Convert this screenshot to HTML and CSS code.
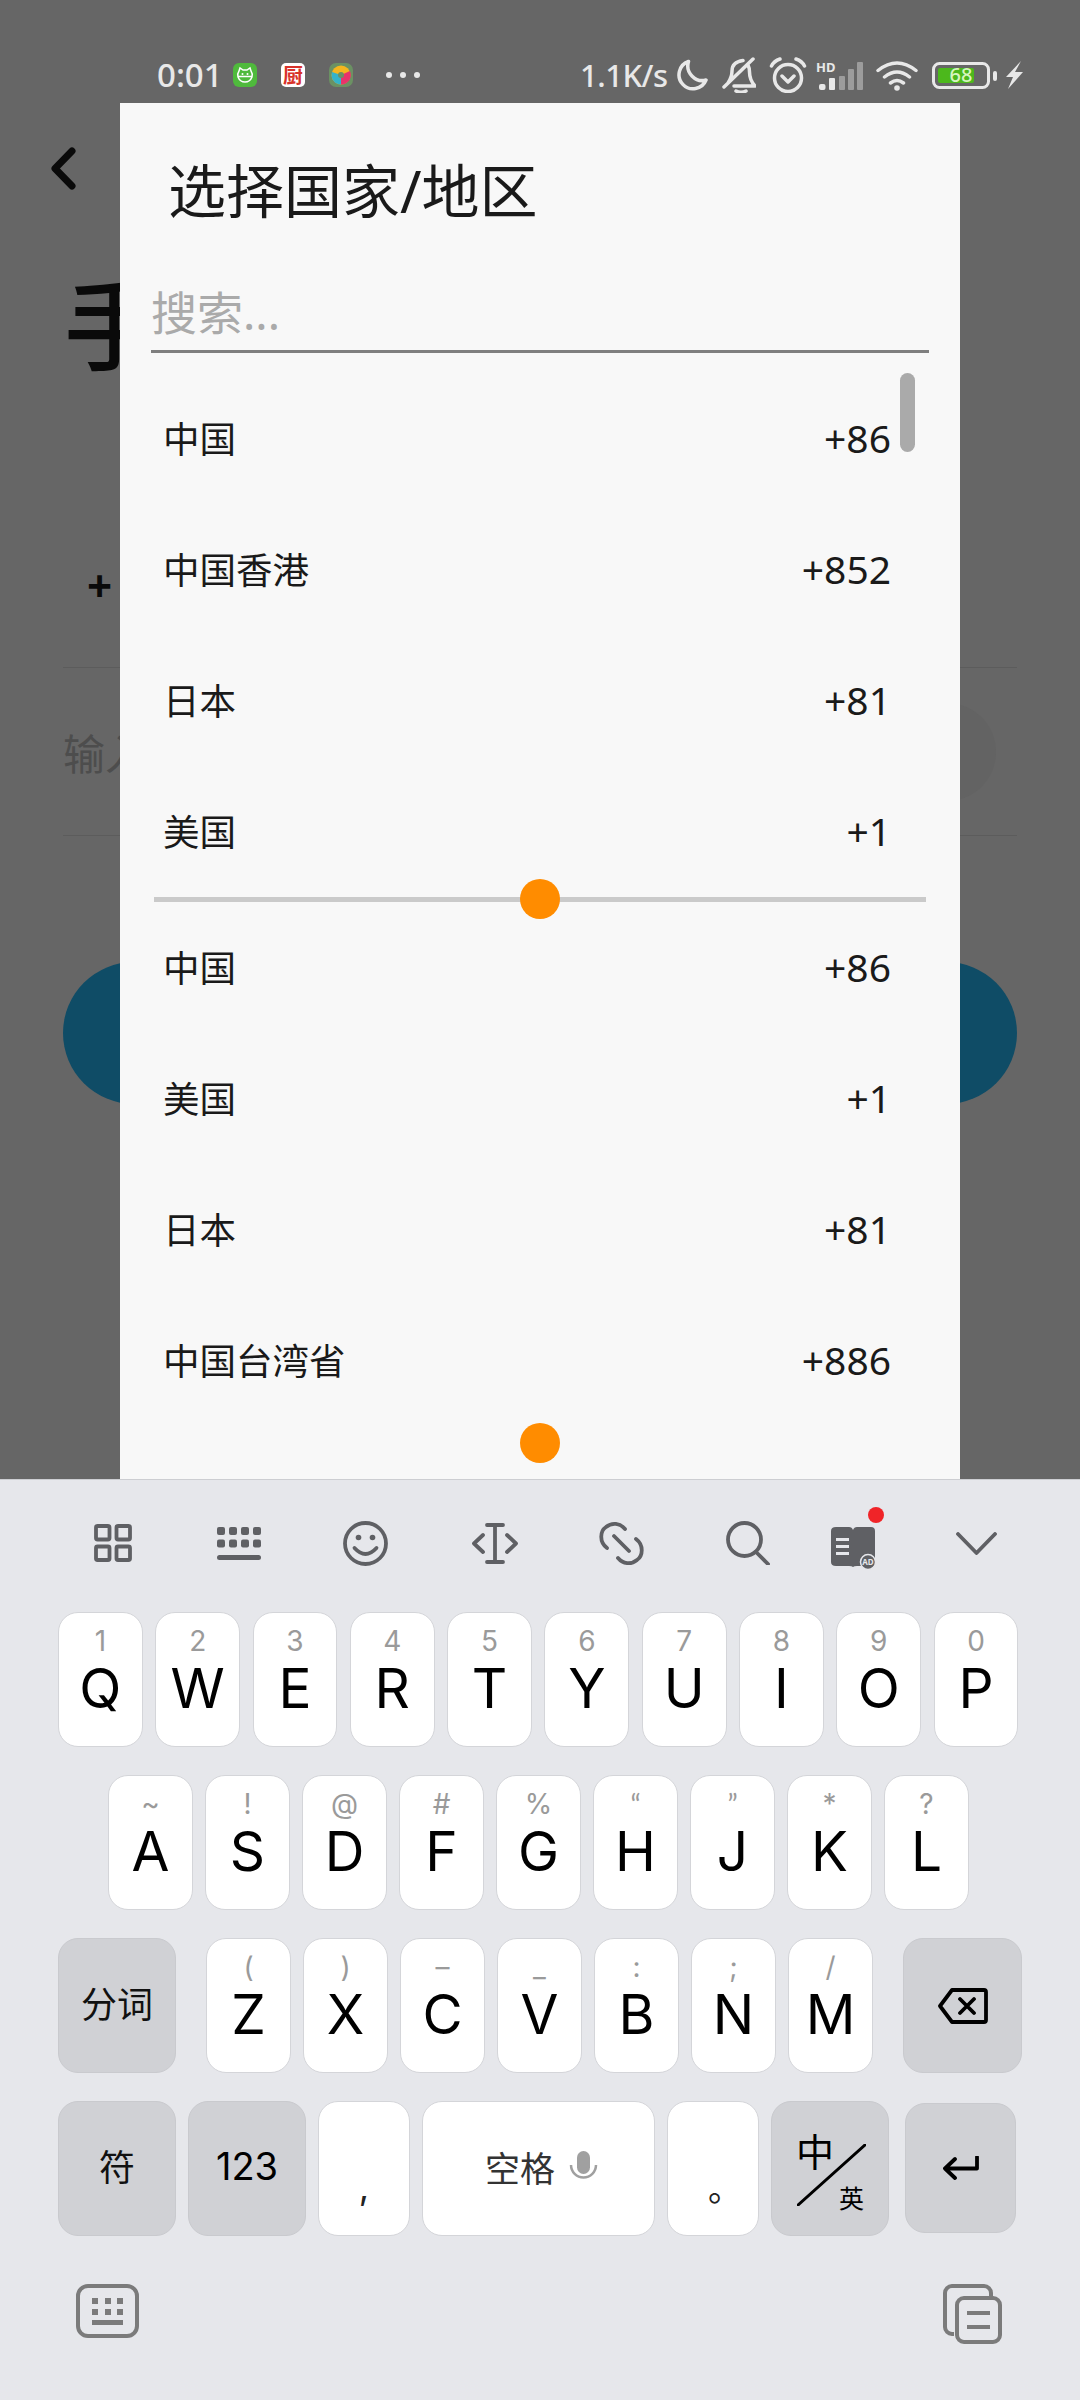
FILE: index.html
```html
<!DOCTYPE html>
<html lang="zh-CN">
<head>
  <meta charset="UTF-8" />
  <meta name="viewport" content="width=device-width, initial-scale=1.0"/>
  <title>选择国家/地区</title>
  <link rel="stylesheet" href="styles.css">
</head>
<body>
<div class="screen">

  <!-- dimmed login page behind the dialog -->
  <div class="page">
    <div class="status">
      <div class="status-left">
        <span class="status-time">0:01</span>
        <svg class="app-icon" viewBox="0 0 24 24">
          <rect width="24" height="24" rx="6" fill="#4fba3c"/>
          <path d="M6 8 L7 5 L10 7 H14 L17 5 L18 8 Q20 11 19 14 Q17 19 12 19 Q7 19 5 14 Q4 11 6 8 Z M5.500 13.500 H18.500" fill="none" stroke="#fff" stroke-width="1.500"/>
          <circle cx="9.500" cy="11" r="1" fill="#fff"/>
          <circle cx="14.500" cy="11" r="1" fill="#fff"/>
        </svg>
        <svg class="app-icon app-gap" viewBox="0 0 24 24">
          <rect width="24" height="24" rx="5" fill="#fff"/>
          <text class="chef" x="12" y="20" text-anchor="middle">厨</text>
        </svg>
        <svg class="app-icon app-gap" viewBox="0 0 24 24">
          <rect width="24" height="24" rx="7" fill="#6b9163"/>
          <circle cx="12" cy="12" r="9.500" fill="#f5b51e"/>
          <path d="M12 12 L21 8 A9.500 9.500 0 0 1 12 21.500 Z" fill="#e8336b"/>
          <path d="M12 12 L12 21.500 A9.500 9.500 0 0 1 3 9 Z" fill="#35b3c9"/>
          <circle cx="12" cy="12" r="3" fill="#6b9163"/>
        </svg>
        <div class="more-dots"><i></i><i></i><i></i></div>
      </div>
      <div class="status-right">
        <span class="status-speed">1.1K/s</span>
        <svg class="icon moon" viewBox="0 0 32 32"><path d="M12.500 2.500A14 14 0 1 0 30 21C20 24 9 14 12.500 2.500Z"/></svg>
        <svg class="icon bell" viewBox="0 0 34 36">
          <path d="M31 2 L2 30 M6 26 Q10 20 10 14 Q10 5 21 3.500 M26 8 Q27.500 11 27.500 15 Q27.500 23 33 29 H12 M14 34 Q19 36.500 24 34"/>
        </svg>
        <svg class="icon alarm" viewBox="0 0 38 36">
          <circle cx="19" cy="21" r="13.500"/>
          <path d="M13 19 L19 25 L25 19 M2.500 9 Q5 4 11 2 M35.500 9 Q33 4 27 2"/>
        </svg>
        <svg class="signal" viewBox="0 0 47 29">
          <text class="signal-hd" x="0" y="11">HD</text>
          <rect class="bar-on" x="3" y="23" width="6.500" height="6" rx="2"/>
          <rect class="bar-on" x="13" y="17" width="6" height="12" rx="1"/>
          <rect class="bar-off" x="23" y="15" width="6" height="14" rx="1"/>
          <rect class="bar-off" x="32" y="8" width="6" height="21" rx="1"/>
          <rect class="bar-off" x="41" y="1" width="6" height="28" rx="1"/>
        </svg>
        <svg class="icon wifi" viewBox="0 0 42 31">
          <path d="M2 10.500 Q21 -4.500 40 10.500 M8.500 17 Q21 7 33.500 17 M14.500 23 Q21 18 27.500 23"/>
          <circle class="wifi-dot" cx="21" cy="28" r="2.800"/>
        </svg>
        <svg class="battery" viewBox="0 0 66 27">
          <rect class="battery-shell" x="1.500" y="1.500" width="55" height="24" rx="6"/>
          <rect class="battery-fill" x="6" y="6" width="36" height="15" rx="2"/>
          <rect class="battery-nub" x="61" y="9" width="4" height="10" rx="2"/>
          <text class="battery-num" x="29" y="20" text-anchor="middle">68</text>
        </svg>
        <svg class="bolt" viewBox="0 0 18 28"><polygon points="16,0 1,16 8,16 3,28 18,11 10,11"/></svg>
      </div>
    </div>

    <svg class="back" viewBox="0 0 25 43"><path d="M21 4 L4 21.500 L21 39"/></svg>
    <h1 class="login-title">手</h1>
    <div class="login-row login-code">+</div>
    <div class="login-row login-phone">
      <span>输入手机号</span>
      <i class="clear-btn"></i>
    </div>
    <div class="login-btn"></div>
  </div>

  <div class="dialog">
    <div class="dialog-title">选择国家/地区</div>
    <div class="search">搜索...</div>
    <div class="thumb"></div>

    <div class="row"><span>中国</span><span class="code">+86</span></div>
    <div class="row"><span>中国香港</span><span class="code">+852</span></div>
    <div class="row"><span>日本</span><span class="code">+81</span></div>
    <div class="row"><span>美国</span><span class="code">+1</span></div>

    <div class="slider"><i class="dot"></i></div>

    <div class="row"><span>中国</span><span class="code">+86</span></div>
    <div class="row"><span>美国</span><span class="code">+1</span></div>
    <div class="row"><span>日本</span><span class="code">+81</span></div>
    <div class="row"><span>中国台湾省</span><span class="code">+886</span></div>

    <i class="dot dot-end"></i>
  </div>

  <div class="keyboard">
    <div class="toolbar">
      <svg class="icon tool" width="38" height="38" viewBox="0 0 38 38">
        <rect x="2" y="2" width="13.500" height="13.500" rx="1.500"/>
        <rect x="22.500" y="2" width="13.500" height="13.500" rx="1.500"/>
        <rect x="2" y="22.500" width="13.500" height="13.500" rx="1.500"/>
        <rect x="22.500" y="22.500" width="13.500" height="13.500" rx="1.500"/>
      </svg>
      <svg class="tool-fill" width="44" height="33" viewBox="0 0 44 33">
        <rect x="0" y="0" width="8" height="8" rx="2"/><rect x="12" y="0" width="8" height="8" rx="2"/>
        <rect x="24" y="0" width="8" height="8" rx="2"/><rect x="36" y="0" width="8" height="8" rx="2"/>
        <rect x="0" y="12.500" width="8" height="8" rx="2"/><rect x="12" y="12.500" width="8" height="8" rx="2"/>
        <rect x="24" y="12.500" width="8" height="8" rx="2"/><rect x="36" y="12.500" width="8" height="8" rx="2"/>
        <rect x="0" y="28" width="44" height="5" rx="2.500"/>
      </svg>
      <svg class="icon tool" width="45" height="45" viewBox="0 0 45 45">
        <circle cx="22.500" cy="22.500" r="20.500"/>
        <path d="M11.500 27 Q22.500 39 33.500 27"/>
        <circle class="tool-dot" cx="15.500" cy="16.500" r="2.800"/>
        <circle class="tool-dot" cx="29.500" cy="16.500" r="2.800"/>
      </svg>
      <svg class="icon tool tool-cursor" width="48" height="41" viewBox="0 0 48 41">
        <path d="M24 2 V39 M16 2 H32 M16 39 H32 M12 12 L3 20.500 L12 29 M36 12 L45 20.500 L36 29"/>
      </svg>
      <svg class="icon tool tool-link" width="45" height="45" viewBox="0 0 45 45">
        <path d="M15 15 L30 30 M8 27 C0 21 1 10 7 6 C13 1 21 2 26 8 M37 18 C45 24 44 35 38 39 C32 44 24 43 19 37"/>
      </svg>
      <svg class="icon tool" width="44" height="44" viewBox="0 0 44 44">
        <circle cx="18.500" cy="18.500" r="16.500"/>
        <path d="M30 31 L42 43"/>
      </svg>
      <svg class="tool-book" width="54" height="64" viewBox="0 0 54 64">
        <circle class="book-badge" cx="45" cy="8" r="8"/>
        <path class="book-body" d="M5 20 H18 Q21 20 22 23 Q23 20 26 20 H40 Q44 20 44 24 V55 Q44 59 40 59 H26 Q23 59 22 60 Q21 59 18 59 H5 Q0 59 0 55 V24 Q0 20 5 20 Z"/>
        <rect class="book-line" x="5" y="31" width="13" height="3"/>
        <rect class="book-line" x="5" y="38" width="13" height="3"/>
        <rect class="book-line" x="5" y="45" width="13" height="3"/>
        <circle class="book-ad" cx="37" cy="55" r="7.500"/>
        <text class="book-ad-text" x="37" y="58" text-anchor="middle">AD</text>
      </svg>
      <svg class="icon tool tool-down" width="41" height="23" viewBox="0 0 41 23">
        <path d="M2 2 L20.500 21 L39 2"/>
      </svg>
    </div>

    <div class="kb-row row-top">
      <div class="key"><small>1</small><b>Q</b></div>
      <div class="key"><small>2</small><b>W</b></div>
      <div class="key"><small>3</small><b>E</b></div>
      <div class="key"><small>4</small><b>R</b></div>
      <div class="key"><small>5</small><b>T</b></div>
      <div class="key"><small>6</small><b>Y</b></div>
      <div class="key"><small>7</small><b>U</b></div>
      <div class="key"><small>8</small><b>I</b></div>
      <div class="key"><small>9</small><b>O</b></div>
      <div class="key"><small>0</small><b>P</b></div>
    </div>
    <div class="kb-row row-mid">
      <div class="key"><small>~</small><b>A</b></div>
      <div class="key"><small>!</small><b>S</b></div>
      <div class="key"><small>@</small><b>D</b></div>
      <div class="key"><small>#</small><b>F</b></div>
      <div class="key"><small>%</small><b>G</b></div>
      <div class="key"><small class="quote">“</small><b>H</b></div>
      <div class="key"><small class="quote">”</small><b>J</b></div>
      <div class="key"><small>*</small><b>K</b></div>
      <div class="key"><small>?</small><b>L</b></div>
    </div>
    <div class="kb-row">
      <div class="key key-fn key-wide key-word">分词</div>
      <div class="key letter-first"><small>(</small><b>Z</b></div>
      <div class="key"><small>)</small><b>X</b></div>
      <div class="key"><small>–</small><b>C</b></div>
      <div class="key"><small>_</small><b>V</b></div>
      <div class="key"><small>:</small><b>B</b></div>
      <div class="key"><small>;</small><b>N</b></div>
      <div class="key"><small>/</small><b>M</b></div>
      <div class="key key-fn key-del">
        <svg class="icon-key" width="50" height="36" viewBox="0 0 50 36">
          <path d="M14 2 H46 Q48 2 48 4 V32 Q48 34 46 34 H14 L2 18 Z M22 11 L36 25 M36 11 L22 25"/>
        </svg>
      </div>
    </div>
    <div class="kb-row row-bottom">
      <div class="key key-fn key-wide key-word">符</div>
      <div class="key key-fn key-wide key-123">123</div>
      <div class="key key-punct">,</div>
      <div class="key key-space"><span>空格</span>
        <svg width="29" height="30" viewBox="0 0 29 30">
          <rect class="mic" x="8" y="0" width="13" height="23" rx="6.500"/>
          <path class="mic-arc" d="M2 14 A12.500 12.500 0 0 0 27 14"/>
        </svg>
      </div>
      <div class="key key-punct key-period">。</div>
      <div class="key key-fn key-wide key-lang">
        <span class="lang-zh">中</span>
        <svg class="lang-slash" width="69" height="62" viewBox="0 0 69 62"><path d="M1 61 L68 1"/></svg>
        <span class="lang-en">英</span>
      </div>
      <div class="key key-fn key-enter">
        <svg class="icon-key" width="36" height="25" viewBox="0 0 36 25">
          <path d="M34 1 V12.500 H3 M12 3 L2 12.500 L12 22"/>
        </svg>
      </div>
    </div>

    <div class="kb-bottom">
      <svg class="icon-grey" width="63" height="54" viewBox="0 0 63 54">
        <rect x="2" y="2" width="59" height="50" rx="10"/>
        <path class="grey-fill" d="M16 14 h6 v6 h-6 z M29 14 h6 v6 h-6 z M41 14 h6 v6 h-6 z M16 25 h6 v6 h-6 z M29 25 h6 v6 h-6 z M41 25 h6 v6 h-6 z M16 36 h31 v5 h-31 z"/>
      </svg>
      <svg class="icon-grey" width="59" height="60" viewBox="0 0 59 60">
        <path d="M11 50 H9 A7 7 0 0 1 2 43 V9 A7 7 0 0 1 9 2 H41 A7 7 0 0 1 48 9 V13"/>
        <rect x="14" y="14" width="43" height="44" rx="7"/>
        <path class="grey-fill" d="M24 27 h23 v4 h-23 z M24 41 h23 v4 h-23 z"/>
      </svg>
    </div>
  </div>
</div>
</body>
</html>
```

FILE: styles.css
```css
* {
  box-sizing: border-box;
}
body {
  margin: 0;
  font-family: "Noto Sans", "Noto Sans CJK SC", sans-serif;
}
.screen {
  position: relative;
  width: 1080px;
  height: 2400px;
  overflow: hidden;
  background: #666;
}

/* page behind the dialog */
.page {
  height: 1479px;
  padding-top: 57px;
}
.status {
  position: relative;
  z-index: 2;
  display: flex;
  justify-content: space-between;
  height: 36px;
  padding: 0 57px 0 157px;
  color: #e8e8e8;
}
.status-left, .status-right {
  display: flex;
  align-items: center;
}
.status-time, .status-speed {
  font-size: 31px;
  font-weight: 500;
  line-height: 36px;
}
.status-time {
  width: 76px;
  font-size: 33px;
}
.app-icon {
  width: 24px;
  height: 24px;
  overflow: visible;
}
.app-gap {
  margin-left: 24px;
}
.chef {
  font-size: 20px;
  font-weight: 700;
  fill: #d8322a;
}
.more-dots {
  display: flex;
  gap: 8px;
  margin-left: 33px;
}
.more-dots i {
  width: 6px;
  height: 6px;
  border-radius: 50%;
  background: #e8e8e8;
}
.icon {
  fill: none;
  stroke: #e8e8e8;
  stroke-width: 3.5;
  stroke-linecap: round;
  stroke-linejoin: round;
}
.status-speed {
  width: 96px;
  letter-spacing: -0.5px;
}
.moon {
  width: 32px;
  height: 32px;
}
.bell {
  width: 34px;
  height: 36px;
  margin-left: 14px;
}
.alarm {
  width: 38px;
  height: 36px;
  margin-left: 13px;
}
.signal {
  width: 47px;
  height: 29px;
  margin-left: 9px;
  overflow: visible;
}
.signal-hd {
  font-size: 13px;
  font-weight: 700;
  fill: #e8e8e8;
}
.bar-on {
  fill: #e8e8e8;
}
.bar-off {
  fill: #9c9c9c;
}
.wifi {
  width: 42px;
  height: 31px;
  margin-left: 13px;
}
.wifi-dot {
  fill: #e8e8e8;
  stroke: none;
}
.battery {
  width: 66px;
  height: 27px;
  margin-left: 14px;
}
.battery-shell {
  fill: none;
  stroke: #e8e8e8;
  stroke-width: 3;
}
.battery-fill {
  fill: #4cb81c;
}
.battery-nub {
  fill: #e8e8e8;
}
.battery-num {
  font-size: 20px;
  font-weight: 500;
  fill: #d6f5c0;
}
.bolt {
  width: 18px;
  height: 28px;
  margin-left: 7px;
  fill: #e8e8e8;
}
.back {
  display: block;
  width: 25px;
  height: 43px;
  margin: 54px 0 0 51px;
  fill: none;
  stroke: #0a0a0a;
  stroke-width: 7;
  stroke-linecap: round;
  stroke-linejoin: round;
}
.login-title {
  width: 57px;
  margin: 72px 0 0 64px;
  overflow: hidden;
  white-space: nowrap;
  font-size: 100px;
  font-weight: 500;
  line-height: 124px;
  color: #0a0a0a;
}
.login-row {
  margin: 0 63px;
  border-bottom: 1px solid #5c5c5c;
}
.login-code {
  height: 282px;
  padding: 177px 0 0 24px;
  font-size: 44px;
  font-weight: 700;
  line-height: 44px;
  color: #0a0a0a;
}
.login-phone {
  display: flex;
  align-items: center;
  justify-content: space-between;
  height: 168px;
  font-size: 42px;
  color: #4d4d4d;
}
.clear-btn {
  width: 98px;
  height: 98px;
  margin-right: 21px;
  border-radius: 50%;
  background: #636363;
}
.login-btn {
  height: 142px;
  margin: 126px 63px 0;
  border-radius: 71px;
  background: #0f4c66;
}

/* country dialog */
.dialog {
  position: absolute;
  top: 103px;
  left: 120px;
  width: 840px;
  height: 1376px;
  overflow: hidden;
  background: #f8f8f8;
  color: #1a1a1a;
}
.dialog-title {
  margin: 50px 0 0 48px;
  font-size: 58px;
  line-height: 76px;
}
.search {
  height: 74px;
  margin: 50px 31px 0;
  border-bottom: 3px solid #7f7f7f;
  font-size: 46px;
  line-height: 66px;
  color: #aaa;
}
.thumb {
  position: absolute;
  top: 270px;
  left: 780px;
  width: 15px;
  height: 79px;
  border-radius: 8px;
  background: #aaa;
}
.row {
  display: flex;
  align-items: center;
  justify-content: space-between;
  height: 131px;
  padding: 0 69px 3px 43px;
  font-size: 36.5px;
}
.search + .thumb + .row {
  margin-top: 20px;
}
.code {
  font-size: 39px;
}
.slider {
  position: relative;
  height: 5px;
  margin: 0 34px;
  background: #cacaca;
}
.dot {
  display: block;
  width: 40px;
  height: 40px;
  border-radius: 50%;
  background: #ff8c00;
}
.slider .dot {
  position: absolute;
  top: -18px;
  left: 366px;
}
.dot-end {
  margin: -3px auto 0;
}

/* keyboard */
.keyboard {
  height: 921px;
  border-top: 1px solid #cdced2;
  background: #e6e7eb;
}
.toolbar {
  display: flex;
  align-items: center;
  gap: 82px;
  height: 132px;
  padding: 0 0 6px 94px;
}
.toolbar .icon {
  stroke: #5f6064;
  stroke-width: 3.8;
}
.toolbar .tool-dot {
  fill: #5f6064;
  stroke: none;
}
.tool-fill {
  fill: #5f6064;
  margin-left: 3px;
}
.tool-cursor {
  margin-left: 1px;
}
.tool-link {
  margin-left: -2px;
}
.tool-book {
  margin: 0 0 8px -21.500px;
}
.tool-down {
  margin-left: -11px;
}
.book-badge {
  fill: #f02428;
}
.book-body, .book-ad {
  fill: #5f6064;
}
.book-line {
  fill: #e6e7eb;
}
.book-ad {
  stroke: #e6e7eb;
  stroke-width: 1.5;
}
.book-ad-text {
  font-size: 8px;
  font-weight: 700;
  fill: #e6e7eb;
}
.kb-row {
  display: flex;
  gap: 12px;
  height: 135px;
  margin-bottom: 28px;
  padding-left: 58px;
}
.row-top {
  gap: 12.500px;
  padding: 0 61.500px 0 58px;
}
.row-top .key {
  flex: 1;
}
.row-mid {
  padding-left: 108px;
}
.key {
  display: flex;
  flex-direction: column;
  align-items: center;
  width: 85px;
  padding-top: 14px;
  border: 1px solid #d4d5d9;
  border-radius: 20px;
  background: #fff;
  color: #000;
  font-family: Inter, "Noto Sans CJK SC", sans-serif;
}
.key small {
  height: 28px;
  font-size: 28px;
  line-height: 28px;
  color: #9a9a9a;
}
.key .quote {
  font-family: Lato, sans-serif;
}
.key b {
  font-size: 55px;
  font-weight: 400;
  line-height: 66px;
}
.key-fn {
  justify-content: center;
  padding-top: 0;
  border-color: #c9cace;
  background: #d0d1d5;
}
.key-wide {
  width: 118px;
}
.key-word {
  padding-bottom: 7px;
  font-size: 36px;
  color: #111;
}
.key-123 {
  padding-bottom: 5px;
  font-size: 38px;
}
.letter-first {
  margin-left: 18px;
}
.key-del {
  width: 119px;
  margin-left: 18px;
}
.key-punct {
  width: 92px;
  padding-top: 63px;
  font-size: 36px;
  line-height: 44px;
  color: #222;
}
.key-period {
  padding: 65px 0 0 24px;
  font-size: 34px;
}
.key-space {
  flex-direction: row;
  justify-content: center;
  gap: 14px;
  width: 233px;
  padding: 0 0 5px 6px;
  font-size: 35px;
  color: #333;
}
.mic {
  fill: #a0a0a0;
}
.mic-arc {
  fill: none;
  stroke: #a0a0a0;
  stroke-width: 2.5;
}
.icon-key {
  fill: none;
  stroke: #000;
  stroke-width: 3.8;
  stroke-linecap: round;
  stroke-linejoin: round;
}
.key-lang {
  position: relative;
}
.lang-zh, .lang-en, .lang-slash {
  position: absolute;
}
.lang-zh {
  top: 26px;
  left: 24px;
  font-size: 38px;
  line-height: 48px;
}
.lang-en {
  top: 81px;
  left: 67px;
  font-size: 25px;
  line-height: 32px;
}
.lang-slash {
  top: 42px;
  left: 25px;
  fill: none;
  stroke: #000;
  stroke-width: 3;
  stroke-linecap: round;
}
.key-enter {
  width: 111px;
  height: 130px;
  margin: 2px 0 0 4px;
}
.kb-bottom {
  display: flex;
  justify-content: space-between;
  align-items: flex-start;
  padding: 20px 78px 0 76px;
}
.icon-grey {
  fill: none;
  stroke: #7b7b7b;
  stroke-width: 4;
}
.icon-grey .grey-fill {
  fill: #7b7b7b;
  stroke: none;
}
```
